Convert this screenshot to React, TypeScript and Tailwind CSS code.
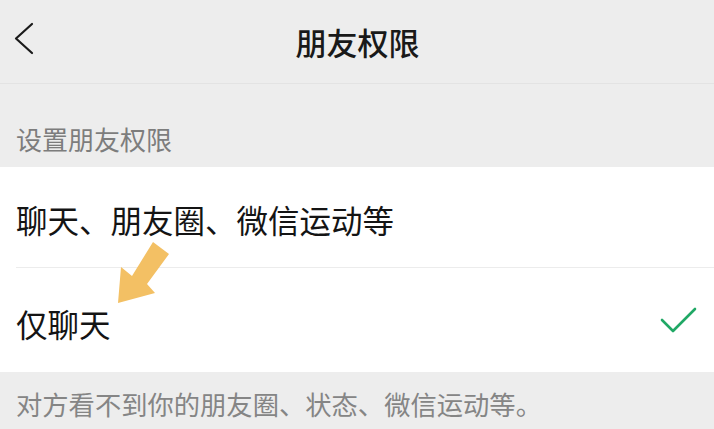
import React from "react"

const font = { fontFamily: '"Noto Sans CJK SC", "Noto Sans", sans-serif' }

export default function App() {
  return (
    <div className="relative w-[714px] h-[429px] overflow-hidden bg-[#ededed]" style={font}>
      {/* header */}
      <div className="relative h-[84px] flex items-center justify-center border-b border-[#e3e3e3]">
        <svg className="absolute left-[13px] top-[22px]" width="21" height="33" viewBox="0 0 21 33">
          <path d="M19 2 L3 16.5 L19 31" fill="none" stroke="#1a1a1a" strokeWidth="2.2" strokeLinejoin="round" strokeLinecap="round" />
        </svg>
        <h1 className="text-[31px] leading-[31px] font-medium text-[#191919] pl-[1px]">朋友权限</h1>
      </div>

      {/* section label */}
      <div className="h-[83px] flex items-end pb-[15px] pl-4">
        <span className="text-[26px] leading-[26px] text-[#7d7d7d]">设置朋友权限</span>
      </div>

      {/* options */}
      <div className="bg-white">
        <div className="pl-4">
          <div className="h-[101px] flex items-center pt-[5px] border-b border-[#ececec]">
            <span className="text-[31.5px] leading-[31px] text-[#141414]">聊天、朋友圈、微信运动等</span>
          </div>
        </div>
        <div className="h-[104px] flex items-center justify-between pl-4 pr-[17px] pt-[6px]">
          <span className="text-[31.5px] leading-[31px] text-[#141414]">仅聊天</span>
          <svg width="38" height="28" viewBox="0 0 38 28" className="mt-[-6px]">
            <path d="M3 14 L14 25 L36 3" fill="none" stroke="#20a865" strokeWidth="2.6" strokeLinecap="round" strokeLinejoin="round" />
          </svg>
        </div>
      </div>

      {/* footer note */}
      <div className="pt-[19px] pl-4">
        <span className="text-[26.3px] leading-[26px] text-[#858585]">对方看不到你的朋友圈、状态、微信运动等。</span>
      </div>

      {/* annotation arrow */}
      <svg className="absolute left-0 top-0 pointer-events-none" width="714" height="429" viewBox="0 0 714 429">
        <polygon points="118,303 121,267 132,276 153,242 169,254 147,284 155,293" fill="#f3c064" />
      </svg>
    </div>
  )
}
